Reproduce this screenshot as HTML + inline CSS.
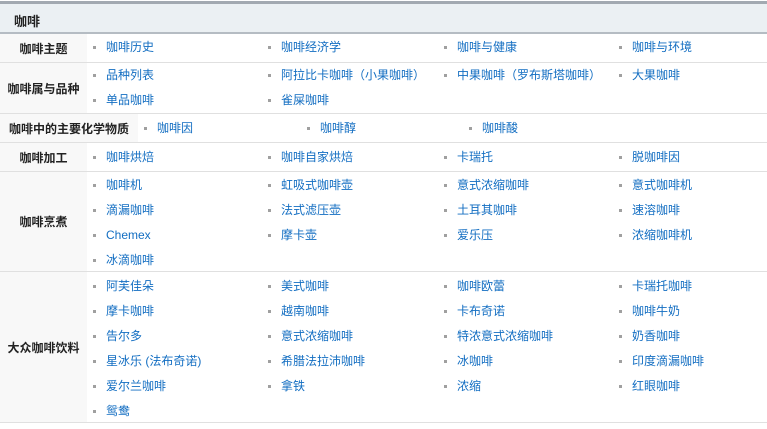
<!DOCTYPE html>
<html><head><meta charset="utf-8"><style>
*{margin:0;padding:0;box-sizing:border-box}
body{width:767px;height:429px;background:#fff;position:relative;overflow:hidden;font-family:"Liberation Sans","Noto Sans CJK SC",sans-serif;font-size:12px}
.a{position:absolute}
.lab{position:absolute;left:0;background:#f8f8f8;font-weight:bold;color:#222;text-align:center;display:flex;align-items:center;justify-content:center}
.hl{position:absolute;left:0;width:767px;height:1px;background:#e0e0e0}
.i{position:absolute;color:#136ec2;white-space:nowrap;line-height:14px;margin-top:1px}
.i:before{content:"";position:absolute;left:-13px;top:6px;width:3px;height:3px;background:#a0a0a0}
</style></head><body>
<div class="a" style="left:0;top:1px;width:767px;height:3px;background:#a2a9b1"></div>
<div class="a" style="left:0;top:4px;width:767px;height:28px;background:#ebf0f3"></div>
<div class="a" style="left:0;top:32px;width:767px;height:2px;background:#b5bcc3"></div>
<div class="a" style="left:14px;top:11px;font-weight:bold;color:#222;font-size:13px">咖啡</div>

<div class="lab" style="top:34px;width:87px;height:28px">咖啡主题</div>
<div class="hl" style="top:62px"></div>
<div class="lab" style="top:63px;width:87px;height:50px">咖啡属与品种</div>
<div class="hl" style="top:113px"></div>
<div class="lab" style="top:114px;width:138px;height:28px">咖啡中的主要化学物质</div>
<div class="hl" style="top:142px"></div>
<div class="lab" style="top:143px;width:87px;height:28px">咖啡加工</div>
<div class="hl" style="top:171px"></div>
<div class="lab" style="top:172px;width:87px;height:99px">咖啡烹煮</div>
<div class="hl" style="top:271px"></div>
<div class="lab" style="top:272px;width:87px;height:150px">大众咖啡饮料</div>
<div class="hl" style="top:422px"></div>

<div class="i" style="left:106px;top:39px">咖啡历史</div>
<div class="i" style="left:281px;top:39px">咖啡经济学</div>
<div class="i" style="left:457px;top:39px">咖啡与健康</div>
<div class="i" style="left:632px;top:39px">咖啡与环境</div>

<div class="i" style="left:106px;top:67px">品种列表</div>
<div class="i" style="left:281px;top:67px">阿拉比卡咖啡（小果咖啡）</div>
<div class="i" style="left:457px;top:67px">中果咖啡（罗布斯塔咖啡）</div>
<div class="i" style="left:632px;top:67px">大果咖啡</div>
<div class="i" style="left:106px;top:92px">单品咖啡</div>
<div class="i" style="left:281px;top:92px">雀屎咖啡</div>

<div class="i" style="left:157px;top:120px">咖啡因</div>
<div class="i" style="left:320px;top:120px">咖啡醇</div>
<div class="i" style="left:482px;top:120px">咖啡酸</div>

<div class="i" style="left:106px;top:149px">咖啡烘焙</div>
<div class="i" style="left:281px;top:149px">咖啡自家烘焙</div>
<div class="i" style="left:457px;top:149px">卡瑞托</div>
<div class="i" style="left:632px;top:149px">脱咖啡因</div>

<div class="i" style="left:106px;top:177px">咖啡机</div>
<div class="i" style="left:281px;top:177px">虹吸式咖啡壶</div>
<div class="i" style="left:457px;top:177px">意式浓缩咖啡</div>
<div class="i" style="left:632px;top:177px">意式咖啡机</div>
<div class="i" style="left:106px;top:202px">滴漏咖啡</div>
<div class="i" style="left:281px;top:202px">法式滤压壶</div>
<div class="i" style="left:457px;top:202px">土耳其咖啡</div>
<div class="i" style="left:632px;top:202px">速溶咖啡</div>
<div class="i" style="left:106px;top:227px">Chemex</div>
<div class="i" style="left:281px;top:227px">摩卡壶</div>
<div class="i" style="left:457px;top:227px">爱乐压</div>
<div class="i" style="left:632px;top:227px">浓缩咖啡机</div>
<div class="i" style="left:106px;top:252px">冰滴咖啡</div>

<div class="i" style="left:106px;top:278px">阿芙佳朵</div>
<div class="i" style="left:281px;top:278px">美式咖啡</div>
<div class="i" style="left:457px;top:278px">咖啡欧蕾</div>
<div class="i" style="left:632px;top:278px">卡瑞托咖啡</div>
<div class="i" style="left:106px;top:303px">摩卡咖啡</div>
<div class="i" style="left:281px;top:303px">越南咖啡</div>
<div class="i" style="left:457px;top:303px">卡布奇诺</div>
<div class="i" style="left:632px;top:303px">咖啡牛奶</div>
<div class="i" style="left:106px;top:328px">告尔多</div>
<div class="i" style="left:281px;top:328px">意式浓缩咖啡</div>
<div class="i" style="left:457px;top:328px">特浓意式浓缩咖啡</div>
<div class="i" style="left:632px;top:328px">奶香咖啡</div>
<div class="i" style="left:106px;top:353px">星冰乐 (法布奇诺)</div>
<div class="i" style="left:281px;top:353px">希腊法拉沛咖啡</div>
<div class="i" style="left:457px;top:353px">冰咖啡</div>
<div class="i" style="left:632px;top:353px">印度滴漏咖啡</div>
<div class="i" style="left:106px;top:378px">爱尔兰咖啡</div>
<div class="i" style="left:281px;top:378px">拿铁</div>
<div class="i" style="left:457px;top:378px">浓缩</div>
<div class="i" style="left:632px;top:378px">红眼咖啡</div>
<div class="i" style="left:106px;top:403px">鸳鸯</div>
</body></html>
